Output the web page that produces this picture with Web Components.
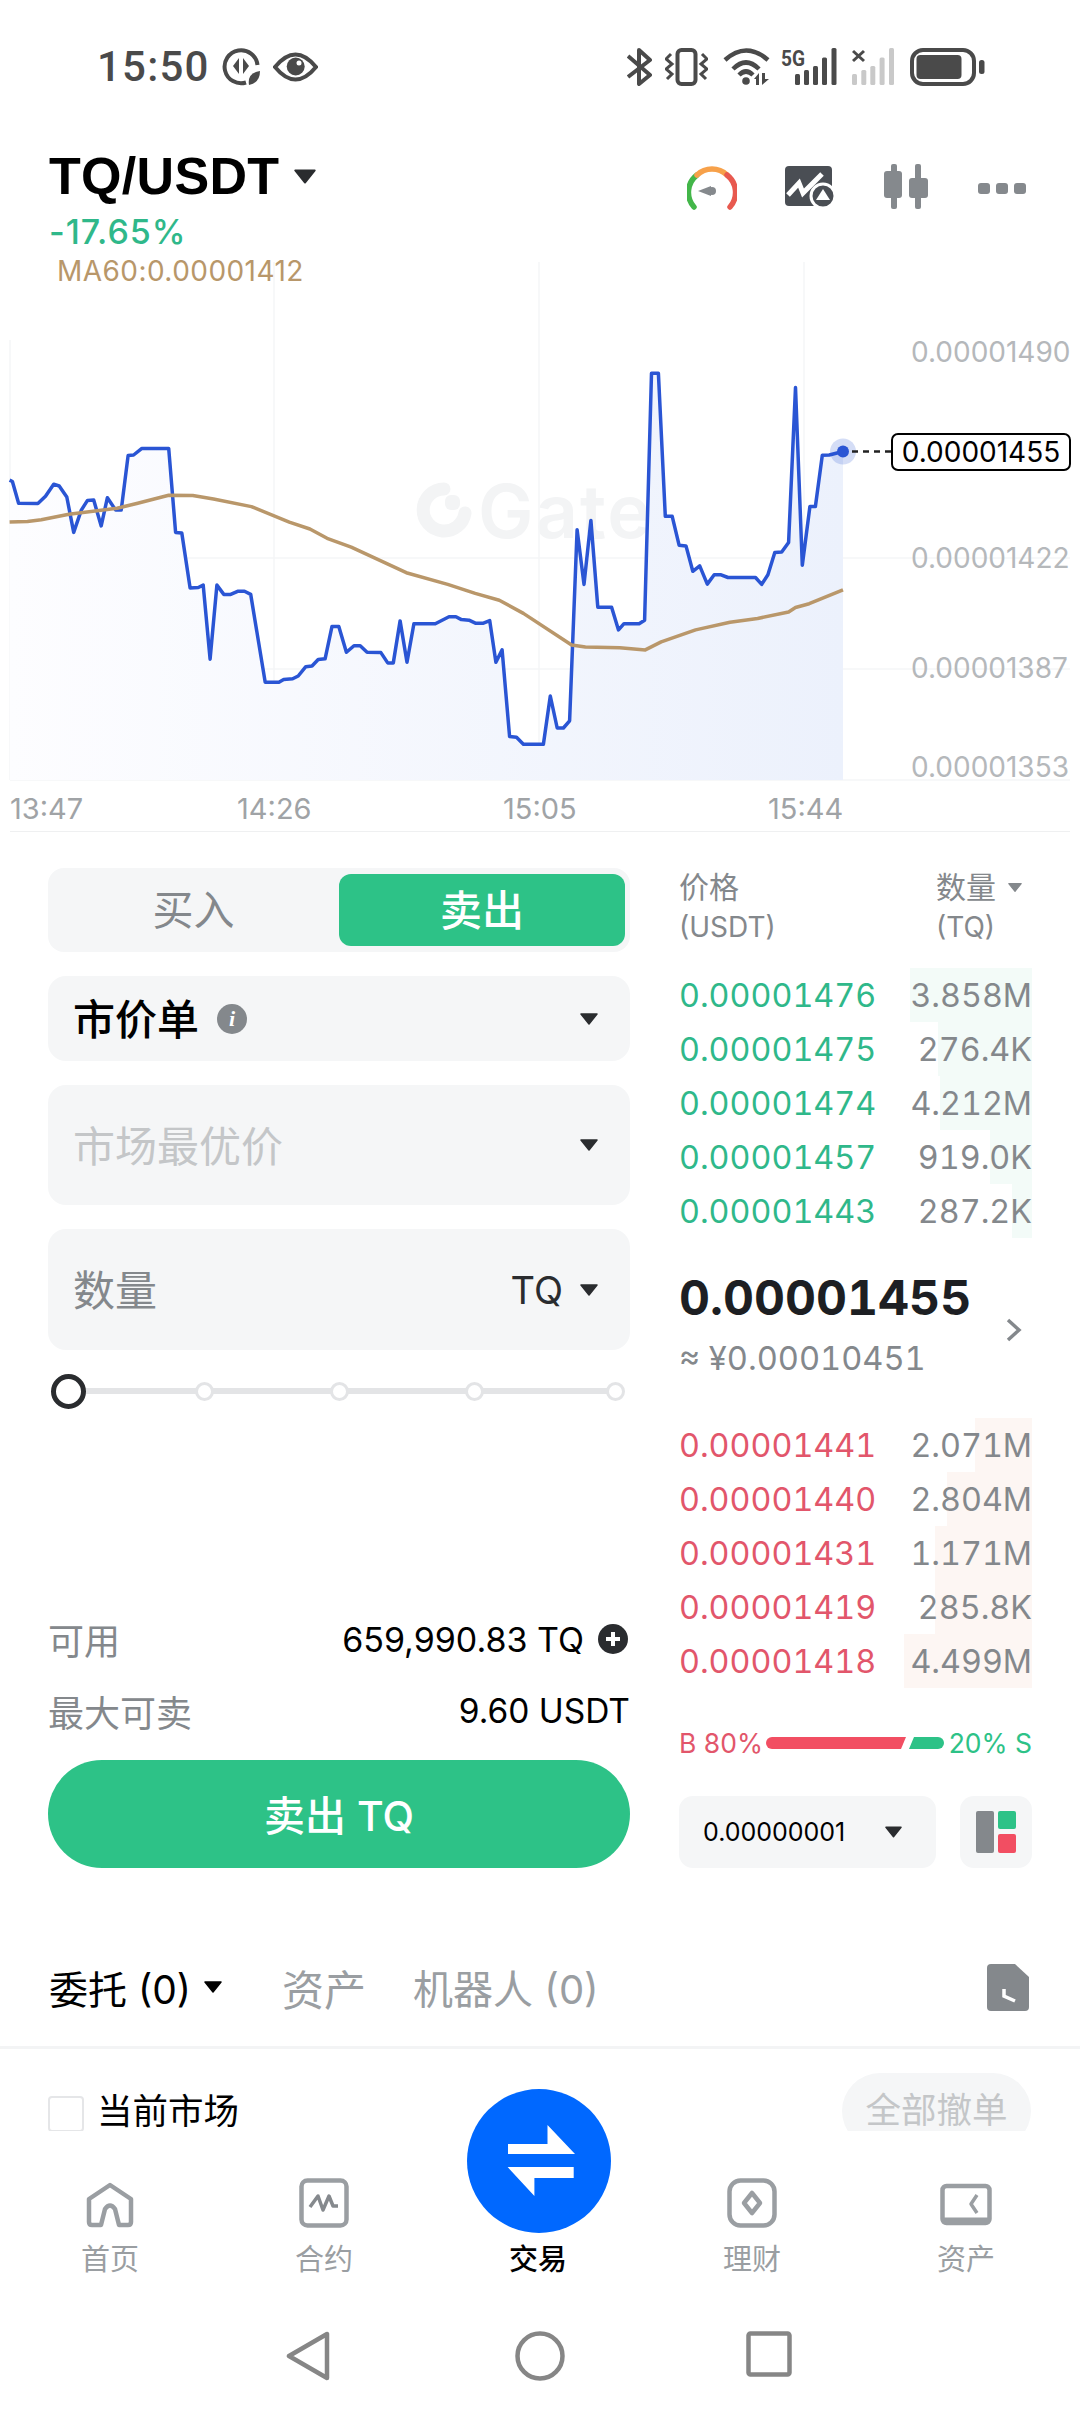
<!DOCTYPE html>
<html lang="zh">
<head>
<meta charset="utf-8">
<title>TQ/USDT</title>
<style>
  html, body { margin: 0; background: #fff; }
  body {
    width: 1080px;
    height: 2412px;
    overflow: hidden;
    display: flex;
    flex-direction: column;
    font-family: Inter, "Noto Sans CJK SC", sans-serif;
    color: #000;
  }
</style>
</head>
<body>
<status-bar></status-bar>
<pair-header></pair-header>
<price-chart></price-chart>
<trade-panel>
  <order-form slot="form"></order-form>
  <order-book slot="book"></order-book>
</trade-panel>
<orders-section></orders-section>
<bottom-nav>
  <nav-item label="首页">
    <svg width="48" height="46" viewBox="0 0 48 46" fill="none" stroke="#9a9ea2" stroke-width="4.5" stroke-linejoin="round"><path d="M24 3 L3 17 V40 Q3 43 6 43 H15 L19 27 Q24 20 29 27 L33 43 H42 Q45 43 45 40 V17 Z"/></svg>
  </nav-item>
  <nav-item label="合约">
    <svg width="50" height="50" viewBox="0 0 50 50" fill="none" stroke="#9a9ea2" stroke-width="4.5"><rect x="2.5" y="2.5" width="45" height="45" rx="6"/><path d="M11 29 L19 18 L24 32 L30 18 L34 28 H39" stroke="#85898d" stroke-width="3.5" stroke-linejoin="round"/></svg>
  </nav-item>
  <nav-item label="交易" active></nav-item>
  <nav-item label="理财">
    <svg width="50" height="50" viewBox="0 0 50 50" fill="none" stroke="#9a9ea2" stroke-width="4.5"><rect x="2.5" y="2.5" width="45" height="45" rx="11"/><path d="M25 15 L33 25 L25 35 L17 25 Z" stroke-linejoin="round"/></svg>
  </nav-item>
  <nav-item label="资产">
    <svg width="52" height="46" viewBox="0 0 52 46" fill="none" stroke="#9a9ea2" stroke-width="4.5"><rect x="2.5" y="4" width="47" height="37" rx="4"/><path d="M2.5 38 H49.500" stroke-width="5"/><path d="M37 13 L31 22 L37 31" stroke-width="3.500" stroke-linejoin="round"/></svg>
  </nav-item>
</bottom-nav>
<system-nav></system-nav>

<script>
// shared bits
const CARET = (w, h, c) => `<svg width="${w}" height="${h}" viewBox="0 0 18 12"><path d="M1 1 H17 L9 11 Z" fill="${c}" stroke="${c}" stroke-linejoin="round" stroke-width="1.5"/></svg>`;

class StatusBar extends HTMLElement {
  constructor() {
    super();
    this.attachShadow({ mode: 'open' });
  }

  connectedCallback() {
    const ink = '#4a4a4a';
    this.shadowRoot.innerHTML = `
      <style>
        :host {
          display: flex;
          align-items: center;
          justify-content: space-between;
          height: 134px;
          padding: 0 95px 0 97px;
          color: ${ink};
        }
        .side { display: flex; align-items: center; }
        .time { font: 500 42px/1 Roboto, sans-serif; margin-right: 12px; letter-spacing: 1.200px; }
        svg { display: block; }
      </style>
      <div class="side">
        <span class="time">15:50</span>
        <svg width="39" height="38" viewBox="0 0 39 38" fill="none" stroke="${ink}" stroke-width="4">
          <path d="M24 34.500 A16.500 16.500 0 1 1 35.500 17"/>
          <path d="M11 18 L17 10 V26 Z M21 10 V26 L27 18 Z" fill="${ink}" stroke="none"/>
          <path d="M27 37 Q25 25 38 23 Q38 35 27 37 Z" fill="${ink}" stroke="none"/>
        </svg>
        <svg style="margin-left:12px" width="45" height="30" viewBox="0 0 45 30" fill="none" stroke="${ink}" stroke-width="4">
          <path d="M2 15 Q22.500 -10 43 15 Q22.500 40 2 15 Z"/>
          <circle cx="22.700" cy="14.500" r="9" fill="${ink}" stroke="none"/>
          <circle cx="26" cy="11" r="2.500" fill="#fff" stroke="none"/>
        </svg>
      </div>
      <div class="side">
        <svg width="25" height="38" viewBox="0 0 25 38" fill="none" stroke="${ink}" stroke-width="4" stroke-linejoin="round"><path d="M1 8 L23 27 L12 36 V2 L23 12 L1 29"/></svg>
        <svg style="margin-left:13px" width="43" height="38" viewBox="0 0 43 38" fill="none" stroke="${ink}" stroke-width="3.500">
          <rect x="12.500" y="2" width="18" height="34" rx="4" stroke-width="4"/>
          <path d="M6 6 L1 11 L7 16 L1 21 L7 26 L2 31 M37 6 L42 11 L36 16 L42 21 L36 26 L41 31" stroke-width="3"/>
        </svg>
        <svg style="margin-left:15px" width="47" height="38" viewBox="0 0 47 38" fill="none" stroke="${ink}" stroke-width="4.500">
          <path d="M2 12 Q23 -7 45 12 M10 21 Q23 8 36 21 M16 27 Q23 20 30 27"/>
          <circle cx="23" cy="33" r="3.800" fill="${ink}" stroke="none"/>
          <path d="M31 31 L36 25 V37 H33 V31 Z M39 25 H42 V31 H46 L39 37 Z" fill="${ink}" stroke="none"/>
        </svg>
        <svg style="margin-left:11px" width="56" height="38" viewBox="0 0 56 38" overflow="visible">
          <text x="0" y="18" font-family="Roboto, sans-serif" font-weight="700" font-size="22" fill="${ink}" textLength="24" lengthAdjust="spacingAndGlyphs">5G</text>
          <g fill="${ink}"><rect x="14" y="26" width="5" height="11" rx="1.500"/><rect x="23" y="22" width="5" height="15" rx="1.500"/><rect x="32" y="18" width="5" height="19" rx="1.500"/><rect x="41" y="9.500" width="5" height="27.500" rx="1.500"/><rect x="50.500" y="0" width="5" height="37" rx="1.500"/></g>
        </svg>
        <svg style="margin-left:15px" width="43" height="38" viewBox="0 0 43 38">
          <path d="M1 3 L12 13 M12 3 L1 13" stroke="${ink}" stroke-width="3"/>
          <g fill="#c9c9c9"><rect x="0" y="26" width="5" height="11" rx="1.500"/><rect x="9.300" y="22" width="5" height="15" rx="1.500"/><rect x="18.300" y="18" width="5" height="19" rx="1.500"/><rect x="27.600" y="9.500" width="5" height="27.500" rx="1.500"/><rect x="37" y="0" width="5" height="37" rx="1.500"/></g>
        </svg>
        <svg style="margin-left:15px" width="75" height="38" viewBox="0 0 75 38" fill="none">
          <rect x="2" y="2" width="62" height="34" rx="11" stroke="${ink}" stroke-width="4"/>
          <rect x="6.500" y="7" width="45" height="24" rx="4" fill="${ink}"/>
          <rect x="69" y="12" width="5.500" height="14" rx="2.500" fill="${ink}"/>
        </svg>
      </div>
    `;
  }
}

class PairHeader extends HTMLElement {
  constructor() {
    super();
    this.attachShadow({ mode: 'open' });
  }

  connectedCallback() {
    this.shadowRoot.innerHTML = `
      <style>
        :host {
          display: flex;
          justify-content: space-between;
          height: 116px;
          padding: 12px 54px 0 49px;
          box-sizing: border-box;
        }
        .title { display: flex; align-items: center; gap: 15px; font: 700 52px/60px "Liberation Sans", sans-serif; letter-spacing: .3px; }
        .change { font: 500 34px/40px Inter, sans-serif; color: #2fb88a; margin-top: 6px; letter-spacing: 1px; }
        .tools { display: flex; align-items: flex-start; padding-top: 20px; }
        .tools svg { display: block; }
      </style>
      <div>
        <div class="title">TQ/USDT ${CARET(22, 15, '#2a2c2f')}</div>
        <div class="change">-17.65%</div>
      </div>
      <div class="tools">
        <svg width="50" height="44" viewBox="0 0 50 44" fill="none" stroke-width="5.500" stroke-linecap="round">
          <path d="M7 41 A22 22 0 0 1 10 9" stroke="#43b649"/>
          <path d="M10 9 A22 22 0 0 1 40 9" stroke="#f7a14a"/>
          <path d="M40 9 A22 22 0 0 1 43 41" stroke="#e8594f"/>
          <path d="M11 25 L24 20 V30 Z" fill="#85898d" stroke="none"/>
          <circle cx="25" cy="25" r="4" fill="#85898d" stroke="none"/>
        </svg>
        <svg style="margin-left:48px" width="50" height="41" viewBox="0 0 50 41">
          <rect x="0" y="0" width="47" height="40" rx="4" fill="#4a4e54"/>
          <path d="M3 29 L14 17 L18 27 L37 8" fill="none" stroke="#fff" stroke-width="5"/>
          <circle cx="38" cy="30" r="12" fill="#4a4e54" stroke="#fff" stroke-width="3"/>
          <path d="M38 23 L45 34 H31 Z" fill="#fff"/>
        </svg>
        <svg style="margin-left:49px;margin-top:-2px" width="44" height="45" viewBox="0 0 44 45" fill="#85898d">
          <rect x="7" y="0" width="6" height="45" rx="2"/><rect x="0" y="7" width="18" height="27" rx="3"/>
          <rect x="31" y="0" width="6" height="45" rx="2"/><rect x="25" y="14" width="19" height="20" rx="3"/>
        </svg>
        <svg style="margin-left:50px;margin-top:17px" width="48" height="11" viewBox="0 0 48 11" fill="#85898d">
          <rect x="0" y="0" width="12" height="11" rx="3"/><rect x="18" y="0" width="12" height="11" rx="3"/><rect x="36" y="0" width="12" height="11" rx="3"/>
        </svg>
      </div>
    `;
  }
}

class PriceChart extends HTMLElement {
  constructor() {
    super();
    this.attachShadow({ mode: 'open' });
  }

  // traced points, 1568 units wide and high over the 1080x540 plot
  toPath(points) {
    return points.map((p, i) => `${i ? 'L' : 'M'}${(p[0] / 1.452).toFixed(1)} ${(p[1] / 2.904).toFixed(1)}`).join(' ');
  }

  connectedCallback() {
    const price = [[14,523],[18,527],[27,590],[55,591],[66,570],[78,535],[86,540],[97,572],[107,675],[118,610],[127,582],[136,581],[147,656],[156,574],[168,610],[176,610],[186,452],[194,450],[206,431],[245,431],[255,675],[264,677],[276,836],[288,835],[295,828],[305,1043],[315,828],[325,855],[335,855],[345,846],[355,846],[364,855],[385,1110],[405,1110],[412,1102],[425,1100],[433,1092],[444,1065],[453,1063],[462,1044],[472,1042],[482,948],[492,948],[503,1023],[514,1004],[523,1004],[533,1023],[553,1024],[563,1054],[571,1054],[581,932],[591,1052],[601,940],[632,940],[652,920],[662,920],[670,928],[681,930],[691,939],[701,939],[711,931],[720,1052],[729,1016],[740,1268],[750,1270],[760,1290],[789,1290],[799,1150],[809,1243],[818,1243],[827,1222],[838,667],[848,826],[858,640],[868,892],[888,892],[898,958],[906,940],[928,940],[936,930],[946,213],[956,213],[966,628],[976,628],[986,712],[996,714],[1006,788],[1016,772],[1027,825],[1037,798],[1047,798],[1057,806],[1097,806],[1106,826],[1115,798],[1125,733],[1135,732],[1145,704],[1155,254],[1165,770],[1176,600],[1184,600],[1194,451],[1204,450],[1224,440]];
    const ma = [[14,645],[40,643],[60,638],[100,622],[170,605],[200,590],[245,567],[280,568],[310,578],[365,600],[420,645],[450,665],[475,692],[510,718],[590,792],[650,826],[690,852],[725,872],[760,910],[830,1002],[850,1008],[900,1010],[937,1016],[960,993],[1010,958],[1060,936],[1100,925],[1145,906],[1155,893],[1175,882],[1224,842]];
    const line = this.toPath(price);
    this.shadowRoot.innerHTML = `
      <style>
        :host { display: block; position: relative; height: 582px; }
        .ma { position: absolute; left: 57px; top: 4px; font-size: 28px; line-height: 34px; color: #b8976a; letter-spacing: .45px; }
        svg { position: absolute; left: 0; top: 50px; overflow: visible; }
        .mark { position: absolute; left: 478px; top: 216px; font-size: 74px; line-height: 90px; font-weight: 600; letter-spacing: 2px; color: #f3f4f5; }
        .axis { position: absolute; left: 911px; font-size: 28px; line-height: 36px; color: #b5b8bb; }
        .time { position: absolute; top: 541px; font-size: 29px; line-height: 36px; color: #a0a3a6; }
        .tag {
          position: absolute; left: 891px; top: 183px; width: 180px; height: 38px;
          box-sizing: border-box; border: 2px solid #000; border-radius: 7px;
          font-size: 28px; line-height: 34px; text-align: center;
        }
        .rule { position: absolute; left: 10px; right: 10px; bottom: 0; height: 1px; background: #eff0f1; }
      </style>
      <div class="mark">Gate</div>
      <svg width="1080" height="540" viewBox="0 0 1080 540" fill="none">
        <defs>
          <linearGradient id="fill" x1="0" x2="1" y1="0" y2="0">
            <stop offset="0" stop-color="#fdfdff"/>
            <stop offset="1" stop-color="#ecf1fc"/>
          </linearGradient>
        </defs>
        <path d="M274 -38 V480 M539 -38 V480 M804 -38 V480 M10 258 H1070 M10 369 H1070 M10 480 H1070 M10 40 V480" stroke="#f5f6f7" stroke-width="1.500"/>
        <path d="M444 189 A21 21 0 1 0 465 213" stroke="#f3f4f5" stroke-width="13" stroke-linecap="round"/>
        <rect x="445" y="195" width="15" height="15" rx="6" fill="#f3f4f5"/>
        <path d="${line} L843 480 L10 480 Z" fill="url(#fill)"/>
        <path d="${line}" stroke="#2a55d4" stroke-width="3.500" stroke-linejoin="round"/>
        <path d="${this.toPath(ma)}" stroke="#b9976a" stroke-width="3.500" stroke-linejoin="round"/>
        <circle cx="843" cy="151.500" r="13" fill="#2a55d4" fill-opacity=".2"/>
        <circle cx="843" cy="151.500" r="6" fill="#2a55d4"/>
        <path d="M852 151.500 H892" stroke="#222" stroke-width="2.500" stroke-dasharray="6 5"/>
      </svg>
      <div class="ma">MA60:0.00001412</div>
      <div class="axis" style="top:84px">0.00001490</div>
      <div class="axis" style="top:290px">0.00001422</div>
      <div class="axis" style="top:400px">0.00001387</div>
      <div class="axis" style="top:499px">0.00001353</div>
      <div class="tag">0.00001455</div>
      <div class="time" style="left:10px">13:47</div>
      <div class="time" style="left:237px">14:26</div>
      <div class="time" style="left:503px">15:05</div>
      <div class="time" style="left:768px">15:44</div>
      <div class="rule"></div>
    `;
  }
}

class TradePanel extends HTMLElement {
  constructor() {
    super();
    this.attachShadow({ mode: 'open' });
  }

  connectedCallback() {
    this.shadowRoot.innerHTML = `
      <style>
        :host {
          display: grid;
          grid-template-columns: 582px 353px;
          column-gap: 49px;
          height: 1036px;
          padding: 0 48px;
        }
      </style>
      <slot name="form"></slot>
      <slot name="book"></slot>
    `;
  }
}

class OrderForm extends HTMLElement {
  constructor() {
    super();
    this.attachShadow({ mode: 'open' });
  }

  connectedCallback() {
    const caret = CARET(18, 12, '#2a2c2f');
    this.shadowRoot.innerHTML = `
      <style>
        :host { display: flex; flex-direction: column; height: 1036px; padding-top: 36px; box-sizing: border-box; }
        .toggle {
          display: grid; grid-template-columns: 1fr 286px; height: 84px;
          padding: 6px 5px 6px 0; box-sizing: border-box;
          background: #f5f6f7; border-radius: 16px; margin-bottom: 24px;
        }
        .toggle span { display: flex; align-items: center; justify-content: center; font-size: 41px; color: #84888c; padding-bottom: 6px; box-sizing: border-box; }
        .toggle .on { background: #2dc287; color: #fff; border-radius: 12px; font-weight: 500; font-size: 42px; }
        .field {
          display: flex; align-items: center; padding: 0 32px 4px 25px; box-sizing: border-box;
          background: #f5f6f7; border-radius: 18px; margin-bottom: 24px; font-size: 42px;
        }
        .field svg, .field .info, .field .unit { margin-top: 4px; }
        .unit { color: #2a2c2f; font-size: 38px; margin-right: 17px; }
        .grow { flex: 1; }
        .info {
          width: 30px; height: 30px; border-radius: 50%; background: #84888c; color: #fff; margin-left: 18px;
          font: italic 700 22px/30px "Liberation Serif", serif; text-align: center;
        }
        .track { position: relative; height: 36px; margin: 23px 0 0 3px; display: flex; align-items: center; }
        .track::before { content: ""; position: absolute; left: 10px; width: 560px; top: 15px; height: 6px; background: #e3e4e6; }
        .knob { position: relative; flex: none; width: 19px; height: 19px; box-sizing: border-box; border: 3px solid #e3e4e6; border-radius: 50%; background: #fff; margin-left: 116px; }
        .knob.second { margin-left: 109px; }
        .knob.last { margin-left: 122px; }
        .knob.first { width: 35px; height: 35px; border: 5px solid #2a2c2f; margin-left: 0; }
        .row { display: flex; justify-content: space-between; align-items: center; height: 40px; font-size: 33.500px; margin-bottom: 32px; }
        .row span:first-child { font-size: 36px; color: #84888c; }
        .row .val { font-size: 34px; display: flex; align-items: center; gap: 14px; margin-right: 2px; }
        .balance { margin-top: auto; }
        .submit {
          display: flex; align-items: center; justify-content: center; height: 108px; border-radius: 54px; margin-top: -3px;
          padding-bottom: 2px; box-sizing: border-box;
          background: #2dc287; color: #fff; font-size: 41px; font-weight: 500;
        }
      </style>
      <div class="toggle"><span>买入</span><span class="on">卖出</span></div>
      <div class="field" style="height:85px;font-weight:500">市价单<span class="info">i</span><span class="grow"></span>${caret}</div>
      <div class="field" style="height:120px;color:#c4c6c8">市场最优价<span class="grow"></span>${caret}</div>
      <div class="field" style="height:121px;color:#84888c;margin-bottom:0">数量<span class="grow"></span><span class="unit">TQ</span>${caret}</div>
      <div class="track">
        <span class="knob first"></span><span class="knob second"></span><span class="knob"></span><span class="knob"></span><span class="knob last"></span>
      </div>
      <div class="row balance"><span>可用</span><span class="val">659,990.83 TQ
        <svg width="30" height="30" viewBox="0 0 30 30"><circle cx="15" cy="15" r="15" fill="#2a2c2f"/><path d="M15 8 V22 M8 15 H22" stroke="#fff" stroke-width="4"/></svg></span></div>
      <div class="row"><span>最大可卖</span><span>9.60 USDT</span></div>
      <div class="submit">卖出 TQ</div>
    `;
  }
}

class OrderRow extends HTMLElement {
  constructor() {
    super();
    this.attachShadow({ mode: 'open' });
  }

  connectedCallback() {
    const ask = this.getAttribute('side') === 'ask';
    this.shadowRoot.innerHTML = `
      <style>
        :host { display: block; height: 54px; }
        .row { position: relative; display: flex; justify-content: space-between; align-items: center; height: 54px; font-size: 32.300px; font-feature-settings: "tnum"; }
        .bar { position: absolute; right: 0; top: 0; bottom: 0; width: ${this.getAttribute('depth')}px; background: ${ask ? '#f3fbf8' : '#fdf6f3'}; }
        .price { position: relative; color: ${ask ? '#2fb88a' : '#e2566b'}; }
        .qty { position: relative; color: #84888c; }
      </style>
      <div class="row">
        <div class="bar"></div>
        <span class="price"><slot name="price"></slot></span>
        <span class="qty"><slot name="qty"></slot></span>
      </div>
    `;
  }
}

class OrderBook extends HTMLElement {
  constructor() {
    super();
    this.attachShadow({ mode: 'open' });
  }

  rows(side, list) {
    return list.map(r => `<order-row side="${side}" depth="${r[2]}"><span slot="price">${r[0]}</span><span slot="qty">${r[1]}</span></order-row>`).join('');
  }

  connectedCallback() {
    this.shadowRoot.innerHTML = `
      <style>
        :host { display: block; padding-top: 40px; }
        .head { display: flex; justify-content: space-between; height: 96px; padding-right: 10px; font-size: 28px; line-height: 34px; color: #84888c; }
        .head div:last-child { width: 86px; }
        .head .cn { font-size: 30px; display: flex; align-items: center; gap: 12px; height: 30px; white-space: nowrap; margin-bottom: 8px; }
        .last { position: relative; height: 180px; }
        .last b { display: block; padding-top: 31px; font-size: 48px; line-height: 58px; font-weight: 700; color: #1d1f23; font-feature-settings: "tnum"; }
        .last span { display: block; margin-top: 11px; font-size: 32.600px; line-height: 40px; color: #84888c; font-feature-settings: "tnum"; }
        .last svg { position: absolute; right: 10px; top: 80px; }
        .ratio { display: flex; align-items: center; height: 36px; margin-top: 37px; font-size: 26.500px; white-space: nowrap; }
        .ratio .b { color: #e2566b; width: 87px; }
        .ratio .s { color: #2dc287; margin-left: auto; }
        .ratio svg { display: block; }
        .tools { display: flex; justify-content: space-between; margin-top: 35px; }
        .tools > div { height: 72px; background: #f5f6f7; border-radius: 14px; display: flex; align-items: center; }
        .step { width: 257px; padding: 0 34px 0 24px; box-sizing: border-box; justify-content: space-between; font-size: 25px; }
        .layout { width: 72px; justify-content: center; }
      </style>
      <div class="head">
        <div><div class="cn">价格</div>(USDT)</div>
        <div><div class="cn">数量 ${CARET(16, 11, '#84888c')}</div>(TQ)</div>
      </div>
      ${this.rows('ask', [['0.00001476','3.858M',122],['0.00001475','276.4K',94],['0.00001474','4.212M',92],['0.00001457','919.0K',42],['0.00001443','287.2K',20]])}
      <div class="last">
        <b>0.00001455</b>
        <span>≈ ¥0.00010451</span>
        <svg width="16" height="24" viewBox="0 0 16 24" fill="none" stroke="#84888c" stroke-width="3.500"><path d="M2 2 L13 12 L2 22"/></svg>
      </div>
      ${this.rows('bid', [['0.00001441','2.071M',57],['0.00001440','2.804M',85],['0.00001431','1.171M',97],['0.00001419','285.8K',97],['0.00001418','4.499M',128]])}
      <div class="ratio">
        <span class="b">B 80%</span>
        <svg width="178" height="12" viewBox="0 0 178 12"><path d="M6 0 H140 L135 12 H6 A6 6 0 0 1 6 0 Z" fill="#f24e62"/><path d="M148 0 H172 A6 6 0 0 1 172 12 H143 Z" fill="#2dc287"/></svg>
        <span class="s">20% S</span>
      </div>
      <div class="tools">
        <div class="step">0.00000001 ${CARET(17, 12, '#2a2c2f')}</div>
        <div class="layout"><svg width="40" height="42" viewBox="0 0 40 42"><rect width="18" height="42" rx="2" fill="#84888c"/><rect x="22" width="18" height="18" rx="2" fill="#2dc287"/><rect x="22" y="23" width="18" height="19" rx="2" fill="#f24e62"/></svg></div>
      </div>
    `;
  }
}

class OrdersSection extends HTMLElement {
  constructor() {
    super();
    this.attachShadow({ mode: 'open' });
  }

  connectedCallback() {
    this.shadowRoot.innerHTML = `
      <style>
        :host { display: block; height: 263px; }
        .tabs {
          display: flex; align-items: center; height: 181px; padding: 60px 51px 0 49px; box-sizing: border-box;
          border-bottom: 3px solid #f3f4f5; font-size: 42px; color: #9a9ea2;
        }
        .tabs svg { display: block; }
        .active { color: #000; font-size: 39px; display: flex; align-items: center; gap: 13px; margin-right: 60px; }
        .robot { font-size: 40px; margin-left: 47px; }
        .grow { flex: 1; }
        .filter { display: flex; align-items: flex-start; padding: 24px 49px 0 48px; }
        .check { width: 36px; height: 36px; box-sizing: border-box; border: 2.500px solid #e5e6e8; border-radius: 4px; margin: 23px 13px 0 0; }
        .label { font-size: 35.500px; line-height: 36px; margin-top: 21px; }
        .pill {
          margin-left: auto; width: 189px; height: 76px; border-radius: 38px; background: #f5f6f7;
          text-align: center; font-size: 35.500px; line-height: 76px; color: #c4c6c8;
        }
      </style>
      <div class="tabs">
        <span class="active">委托 (0) ${CARET(18, 14, '#000')}</span>
        <span>资产</span>
        <span class="robot">机器人 (0)</span>
        <span class="grow"></span>
        <svg width="42" height="47" viewBox="0 0 42 47"><path d="M4 0 H28 L42 13 V43 A4 4 0 0 1 38 47 H4 A4 4 0 0 1 0 43 V4 A4 4 0 0 1 4 0 Z" fill="#84888c"/><path d="M17 25 V32 L28 37" fill="none" stroke="#fff" stroke-width="3.500"/></svg>
      </div>
      <div class="filter">
        <span class="check"></span>
        <span class="label">当前市场</span>
        <span class="pill">全部撤单</span>
      </div>
    `;
  }
}

class BottomNav extends HTMLElement {
  constructor() {
    super();
    this.attachShadow({ mode: 'open' });
  }

  connectedCallback() {
    this.shadowRoot.innerHTML = `
      <style>
        :host {
          display: grid; grid-template-columns: repeat(5, 214px); justify-content: center;
          position: relative; height: 166px; padding: 0 4px 0 0; box-sizing: border-box; background: #fff;
        }
        .swap {
          position: absolute; left: 467px; top: -42px; width: 144px; height: 144px;
          border-radius: 50%; background: #0068ff;
        }
        .swap svg { display: block; }
      </style>
      <slot></slot>
      <div class="swap">
        <svg width="144" height="144" viewBox="0 0 144 144" fill="#fff">
          <path d="M80.500 36 L108 65 H41 V55 H80.500 Z"/>
          <path d="M40.600 78 H106.700 V89 H67.400 V107 Z"/>
        </svg>
      </div>
    `;
  }
}

class NavItem extends HTMLElement {
  constructor() {
    super();
    this.attachShadow({ mode: 'open' });
  }

  connectedCallback() {
    const active = this.hasAttribute('active');
    this.shadowRoot.innerHTML = `
      <style>
        :host { display: flex; flex-direction: column; align-items: center; }
        .icon { height: 111px; display: flex; align-items: flex-end; padding-bottom: 14px; box-sizing: border-box; }
        .label { font-size: 29px; line-height: 36px; color: ${active ? '#000' : '#9a9ea2'}; font-weight: ${active ? 500 : 400}; }
      </style>
      <div class="icon"><slot></slot></div>
      <div class="label">${this.getAttribute('label')}</div>
    `;
  }
}

class SystemNav extends HTMLElement {
  constructor() {
    super();
    this.attachShadow({ mode: 'open' });
  }

  connectedCallback() {
    this.shadowRoot.innerHTML = `
      <style>
        :host { display: flex; justify-content: center; align-items: flex-start; flex: 1; padding: 34px 3px 0 0; }
        svg { display: block; }
      </style>
      <svg width="44" height="50" viewBox="0 0 44 50" fill="none" stroke="#868686" stroke-width="4.500" stroke-linejoin="round"><path d="M41 3 V47 L3 25 Z"/></svg>
      <svg style="margin-left:185px" width="50" height="50" viewBox="0 0 50 50" fill="none" stroke="#868686" stroke-width="4.500"><circle cx="25" cy="25" r="22.500"/></svg>
      <svg style="margin-left:181px" width="46" height="46" viewBox="0 0 46 46" fill="none" stroke="#868686" stroke-width="4.500" stroke-linejoin="round"><rect x="2.500" y="2.500" width="41" height="41" rx="2"/></svg>
    `;
  }
}

customElements.define('status-bar', StatusBar);
customElements.define('pair-header', PairHeader);
customElements.define('price-chart', PriceChart);
customElements.define('trade-panel', TradePanel);
customElements.define('order-form', OrderForm);
customElements.define('order-row', OrderRow);
customElements.define('order-book', OrderBook);
customElements.define('orders-section', OrdersSection);
customElements.define('bottom-nav', BottomNav);
customElements.define('nav-item', NavItem);
customElements.define('system-nav', SystemNav);
</script>
</body>
</html>
